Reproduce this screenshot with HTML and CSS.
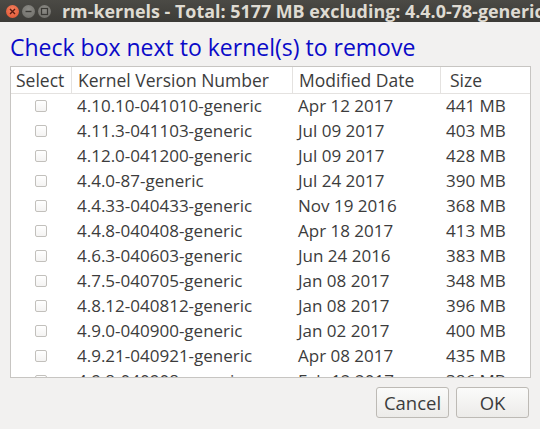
FILE: index.html
```html
<!DOCTYPE html>
<html>
<head>
<meta charset="utf-8">
<link rel="stylesheet" href="styles.css">
</head>
<body>
<div class="window">
  <div class="titlebar">
    <div class="wbtns">
      <span class="wb close"><svg width="9" height="9" viewBox="0 0 9 9"><path d="M2 2 L7 7 M7 2 L2 7" stroke="#5a1a10" stroke-width="1.4"/></svg></span>
      <span class="wb min"><svg width="9" height="9" viewBox="0 0 9 9"><path d="M1.5 4.5 H7.5" stroke="#3a3935" stroke-width="1.4"/></svg></span>
      <span class="wb max"><svg width="9" height="9" viewBox="0 0 9 9"><rect x="1.5" y="1.5" width="6" height="6" fill="none" stroke="#3a3935" stroke-width="1.2"/></svg></span>
    </div>
    <div class="title">rm-kernels - Total: 5177 MB excluding: 4.4.0-78-generic</div>
  </div>
  <div class="content">
    <h1 class="heading">Check box next to kernel(s) to remove</h1>
    <div class="list">
      <div class="row head">
        <div class="c sel">Select</div>
        <div class="c ver">Kernel Version Number</div>
        <div class="c date">Modified Date</div>
        <div class="c size">Size</div>
      </div>
      <div class="row"><div class="c sel"><span class="cb"></span></div><div class="c ver">4.10.10-041010-generic</div><div class="c date">Apr 12 2017</div><div class="c size">441 MB</div></div>
      <div class="row"><div class="c sel"><span class="cb"></span></div><div class="c ver">4.11.3-041103-generic</div><div class="c date">Jul 09 2017</div><div class="c size">403 MB</div></div>
      <div class="row"><div class="c sel"><span class="cb"></span></div><div class="c ver">4.12.0-041200-generic</div><div class="c date">Jul 09 2017</div><div class="c size">428 MB</div></div>
      <div class="row"><div class="c sel"><span class="cb"></span></div><div class="c ver">4.4.0-87-generic</div><div class="c date">Jul 24 2017</div><div class="c size">390 MB</div></div>
      <div class="row"><div class="c sel"><span class="cb"></span></div><div class="c ver">4.4.33-040433-generic</div><div class="c date">Nov 19 2016</div><div class="c size">368 MB</div></div>
      <div class="row"><div class="c sel"><span class="cb"></span></div><div class="c ver">4.4.8-040408-generic</div><div class="c date">Apr 18 2017</div><div class="c size">413 MB</div></div>
      <div class="row"><div class="c sel"><span class="cb"></span></div><div class="c ver">4.6.3-040603-generic</div><div class="c date">Jun 24 2016</div><div class="c size">383 MB</div></div>
      <div class="row"><div class="c sel"><span class="cb"></span></div><div class="c ver">4.7.5-040705-generic</div><div class="c date">Jan 08 2017</div><div class="c size">348 MB</div></div>
      <div class="row"><div class="c sel"><span class="cb"></span></div><div class="c ver">4.8.12-040812-generic</div><div class="c date">Jan 08 2017</div><div class="c size">396 MB</div></div>
      <div class="row"><div class="c sel"><span class="cb"></span></div><div class="c ver">4.9.0-040900-generic</div><div class="c date">Jan 02 2017</div><div class="c size">400 MB</div></div>
      <div class="row"><div class="c sel"><span class="cb"></span></div><div class="c ver">4.9.21-040921-generic</div><div class="c date">Apr 08 2017</div><div class="c size">435 MB</div></div>
      <div class="row"><div class="c sel"><span class="cb"></span></div><div class="c ver">4.9.8-040908-generic</div><div class="c date">Feb 12 2017</div><div class="c size">386 MB</div></div>
    </div>
    <div class="buttons">
      <button class="btn">Cancel</button>
      <button class="btn">OK</button>
    </div>
  </div>
</div>
</body>
</html>
```
FILE: styles.css
```css
html, body {
  margin: 0;
  padding: 0;
  background: #f2f1f0;
  font-family: "Open Sans", "DejaVu Sans", sans-serif;
  color: #3c3c3c;
}
.window {
  width: 540px;
  height: 429px;
  overflow: hidden;
}
.titlebar {
  height: 22px;
  background: linear-gradient(#4b4a45, #3c3b37);
  display: flex;
  align-items: center;
  overflow: hidden;
  white-space: nowrap;
}
.wbtns {
  display: flex;
  gap: 3px;
  padding-left: 6px;
  width: 55px;
  flex: none;
}
.wb {
  width: 13px;
  height: 13px;
  border-radius: 50%;
  display: flex;
  align-items: center;
  justify-content: center;
}
.wb.close {
  background: radial-gradient(circle at 50% 35%, #f3815f, #e0512f);
}
.wb.min, .wb.max {
  background: radial-gradient(circle at 50% 35%, #8d8c87, #6b6a65);
}
.title {
  color: #dfdbd2;
  font-weight: bold;
  font-size: 17.9px;
  letter-spacing: 0;
  padding-left: 1px;
}
.content {
  padding: 0 10px 0 10px;
}
.heading {
  margin: 0;
  height: 44px;
  font-size: 23px;
  font-weight: normal;
  color: #0a0ac8;
  box-sizing: border-box;
  display: flex;
  align-items: center;
  padding-top: 5px;
}
.list {
  background: #ffffff;
  border: 1px solid #c7c5c2;
  height: 312px;
  overflow: hidden;
  box-sizing: border-box;
  width: 521px;
}
.row {
  display: grid;
  grid-template-columns: 61px 221px 148px 1fr;
  height: 25px;
  box-sizing: border-box;
  padding-bottom: 4px;
  align-items: center;
  font-size: 17px;
  white-space: nowrap;
}
.row.head {
  height: 27px;
  padding-bottom: 0;
  border-bottom: 1px solid #e4e2e0;
  align-items: stretch;
  font-size: 17.5px;
}
.row.head .c {
  display: flex;
  align-items: center;
  border-right: 1px solid #e4e2e0;
  padding-left: 6px;
}
.row.head .c.size {
  border-right: none;
  padding-left: 9px;
}
.row.head .c.sel {
  padding-left: 5px;
  justify-content: flex-start;
}
.c.ver, .c.date {
  padding-left: 5px;
}
.c.size {
  padding-left: 5px;
}
.c.sel {
  display: flex;
  justify-content: center;
}
.cb {
  width: 10px;
  height: 10px;
  border: 1px solid #c2c0bc;
  border-radius: 2px;
  background: linear-gradient(#ffffff, #f4f3f2);
  margin-right: 2px;
}
.buttons {
  display: flex;
  justify-content: flex-end;
  gap: 7px;
  margin-top: 9px;
  padding-right: 1px;
}
.btn {
  width: 73px;
  height: 31px;
  border: 1px solid #bdbab5;
  border-radius: 3px;
  background: linear-gradient(#fbfbfa, #ecebe9);
  font-family: "Open Sans", "DejaVu Sans", sans-serif;
  font-size: 18.5px;
  color: #3c3c3c;
  padding: 0;
}
```
